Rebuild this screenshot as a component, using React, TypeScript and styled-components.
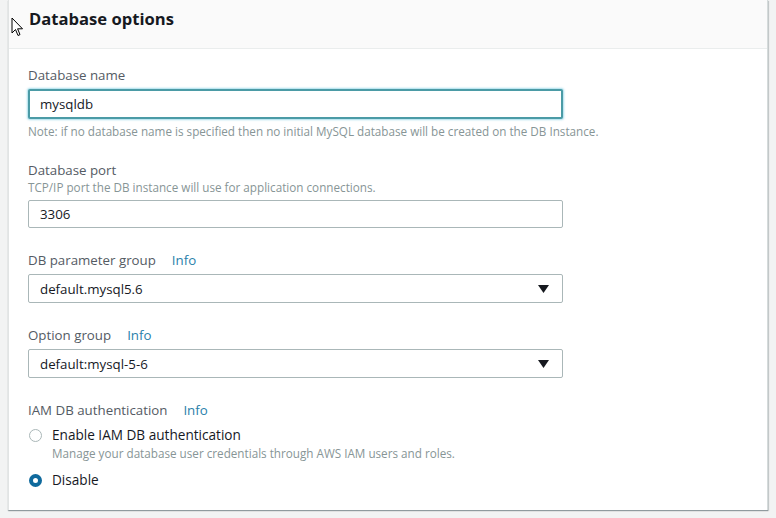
import React from "react";
import styled, { createGlobalStyle } from "styled-components";

const Global = createGlobalStyle`
  html, body { margin: 0; padding: 0; }
  body {
    background: #f2f3f3;
    font-family: "Open Sans", "Noto Sans", Arial, sans-serif;
    width: 776px;
    height: 518px;
    overflow: hidden;
  }
`;

const Page = styled.div`
  position: relative;
  padding: 0 8px;
  height: 518px;
  box-sizing: border-box;
`;

const Card = styled.section`
  background: #fff;
  border-left: 1px solid #e1e4e4;
  border-right: 1px solid #d5dbdb;
  box-shadow: 0 1px 1px 0 rgba(0, 28, 36, 0.3), 1px 1px 1px 0 rgba(0, 28, 36, 0.15);
  height: 510px;
  box-sizing: border-box;
  display: flex;
  flex-direction: column;
`;

const Header = styled.header`
  background: #fafafa;
  border-bottom: 1px solid #eaeded;
  height: 50px;
  box-sizing: border-box;
  padding: 7px 20px 0;
`;

const Title = styled.h2`
  margin: 0;
  font-size: 16.6px;
  line-height: 24px;
  font-weight: 700;
  color: #16191f;
`;

const Body = styled.div`
  padding: 16px 20px 20px 19px;
  display: flex;
  flex-direction: column;
`;

const Field = styled.div<{ $mt: number }>`
  display: flex;
  flex-direction: column;
  margin-top: ${(p) => p.$mt}px;
`;

const LabelRow = styled.div`
  display: flex;
  align-items: center;
  gap: 16px;
  padding-top: 1px;
  font-size: 13.3px;
  line-height: 18px;
  color: #545b64;
`;

const InfoLink = styled.span`
  color: #2a7fab;
  font-size: 13.3px;
`;

const Description = styled.div`
  font-size: 11.7px;
  line-height: 16px;
  color: #879596;
`;

const Note = styled(Description)`
  margin-top: 4px;
`;

const TextInput = styled.div<{ $focused?: boolean; $h: number }>`
  margin-top: 5px;
  width: 535px;
  height: ${(p) => p.$h}px;
  box-sizing: border-box;
  border: ${(p) => (p.$focused ? "2px solid #4b9ba6" : "1px solid #aab7b8")};
  box-shadow: ${(p) => (p.$focused ? "0 0 2px 1px rgba(0, 161, 201, 0.35)" : "none")};
  border-radius: 2px;
  background: #fff;
  display: flex;
  align-items: center;
  padding: 0 ${(p) => (p.$focused ? 10 : 11)}px;
  font-size: 13.3px;
  color: #16191f;
`;

const SelectBox = styled(TextInput)`
  justify-content: space-between;
  padding-right: 13px;
`;

const Caret = styled.svg`
  width: 11px;
  height: 8px;
  display: block;
`;

const RadioRow = styled.label<{ $mt: number }>`
  display: flex;
  align-items: center;
  gap: 10px;
  margin-top: ${(p) => p.$mt}px;
  padding-left: 1px;
  font-size: 13.6px;
  line-height: 20px;
  color: #16191f;
`;

const Radio = styled.span<{ $checked?: boolean }>`
  width: 13px;
  height: 13px;
  box-sizing: border-box;
  border-radius: 50%;
  border: ${(p) => (p.$checked ? "4px solid #0f6a9d" : "1px solid #aab7b8")};
  background: #fff;
  flex: none;
`;

const RadioDesc = styled(Description)`
  padding-left: 24px;
`;

const Cursor = styled.svg`
  position: absolute;
  left: 11px;
  top: 17px;
  width: 13px;
  height: 21px;
`;

function Select({ value }: { value: string }) {
  return (
    <SelectBox $h={29}>
      <span>{value}</span>
      <Caret viewBox="0 0 11 8">
        <path d="M0 0 H11 L5.5 8 Z" fill="#16191f" />
      </Caret>
    </SelectBox>
  );
}

export default function App() {
  return (
    <>
      <Global />
      <Page>
        <Card>
          <Header>
            <Title>Database options</Title>
          </Header>
          <Body>
            <Field $mt={0}>
              <LabelRow>Database name</LabelRow>
              <TextInput $focused $h={30}>mysqldb</TextInput>
              <Note>
                Note: if no database name is specified then no initial MySQL database will be created on the DB Instance.
              </Note>
            </Field>
            <Field $mt={21}>
              <LabelRow>Database port</LabelRow>
              <Description>TCP/IP port the DB instance will use for application connections.</Description>
              <TextInput $h={28}>3306</TextInput>
            </Field>
            <Field $mt={22}>
              <LabelRow>
                DB parameter group <InfoLink>Info</InfoLink>
              </LabelRow>
              <Select value="default.mysql5.6" />
            </Field>
            <Field $mt={22}>
              <LabelRow>
                Option group <InfoLink>Info</InfoLink>
              </LabelRow>
              <Select value="default:mysql-5-6" />
            </Field>
            <Field $mt={22}>
              <LabelRow>
                IAM DB authentication <InfoLink>Info</InfoLink>
              </LabelRow>
              <RadioRow $mt={6}>
                <Radio />
                Enable IAM DB authentication
              </RadioRow>
              <RadioDesc>Manage your database user credentials through AWS IAM users and roles.</RadioDesc>
              <RadioRow $mt={9}>
                <Radio $checked />
                Disable
              </RadioRow>
            </Field>
          </Body>
        </Card>
        <Cursor viewBox="0 0 13 21">
          <path d="M1 1 L1 16 L4.5 12.5 L7 18.5 L9 17.6 L6.6 11.8 L11.5 11.8 Z" fill="#fff" stroke="#000" strokeWidth="1" strokeLinejoin="miter" />
        </Cursor>
      </Page>
    </>
  );
}
